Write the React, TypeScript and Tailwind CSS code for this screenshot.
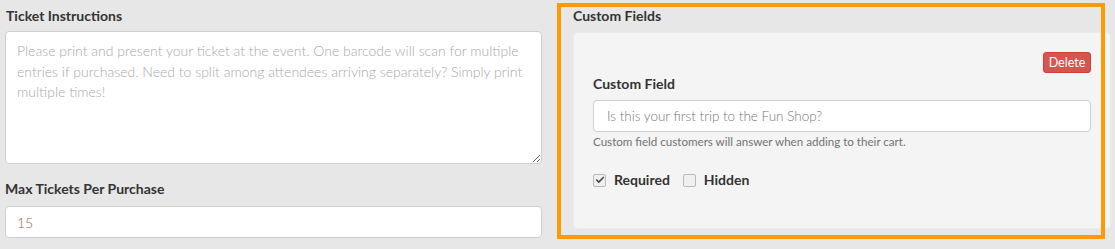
import { Check } from 'lucide-react';

const font = { fontFamily: 'Lato, "Open Sans", sans-serif' };

const Checkbox = ({ checked }: { checked?: boolean }) => (
  <span className="flex h-[13px] w-[13px] items-center justify-center rounded-[2px] border border-[#b9b9b9] bg-[#f0f0f0]">
    {checked && <Check size={10} strokeWidth={4} className="text-[#4a4a4a]" />}
  </span>
);

const App = () => {
  return (
    <div
      className="relative flex h-[249px] w-[1115px] gap-[31px] overflow-hidden bg-[#e7e7e7] pl-[5px] text-[#333]"
      style={font}
    >
      <section className="flex w-[537px] flex-col pt-[6px]">
        <label className="mb-[5px] pl-px text-[14px] font-bold leading-[20px]">
          Ticket Instructions
        </label>
        <textarea
          readOnly
          className="h-[133px] w-full rounded-[4px] border border-[#cfcfcf] bg-white px-[11px] py-[9px] text-[14px] font-light leading-[20.5px] text-[#a9a9a9] outline-none"
          style={font}
          defaultValue="Please print and present your ticket at the event. One barcode will scan for multiple entries if purchased. Need to split among attendees arriving separately? Simply print multiple times!"
        />
        <label className="mt-[15px] mb-[7px] text-[14px] font-bold leading-[20px]">
          Max Tickets Per Purchase
        </label>
        <input
          readOnly
          className="h-[32px] w-full rounded-[4px] border border-[#cfcfcf] bg-white px-[11px] text-[14px] font-light text-[#94675a] outline-none"
          style={font}
          defaultValue="15"
        />
      </section>

      <section className="flex w-[538px] flex-col pt-[6px]">
        <h3 className="mb-[6px] text-[14px] font-bold leading-[20px]">
          Custom Fields
        </h3>
        <div className="flex h-[197px] flex-col rounded-[4px] border border-[#ececec] bg-[#f4f4f4] px-[19px] pt-[19px]">
          <div className="flex justify-end">
            <button className="h-[21px] w-[48px] rounded-[3px] border border-[#d43f3a] bg-[#d9534f] text-[12.5px] leading-[19px] text-white">
              Delete
            </button>
          </div>
          <label className="mt-px mb-[6px] text-[14px] font-bold leading-[20px]">
            Custom Field
          </label>
          <input
            readOnly
            className="h-[32px] w-full rounded-[4px] border border-[#cfcfcf] bg-white px-[13px] text-[13.5px] font-light text-[#777] outline-none"
            style={font}
            defaultValue="Is this your first trip to the Fun Shop?"
          />
          <p className="mt-px text-[11.6px] leading-[17px] text-[#737373]">
            Custom field customers will answer when adding to their cart.
          </p>
          <div className="mt-[20px] flex items-center text-[14px] font-bold leading-[20px]">
            <Checkbox checked />
            <span className="ml-[8px]">Required</span>
            <span className="ml-[13px]">
              <Checkbox />
            </span>
            <span className="ml-[8px]">Hidden</span>
          </div>
        </div>
      </section>

      <div className="pointer-events-none absolute left-[557px] top-[3px] h-[236px] w-[548px] border-[4px] border-[#ff9a00]" />
    </div>
  );
};

export default App;
